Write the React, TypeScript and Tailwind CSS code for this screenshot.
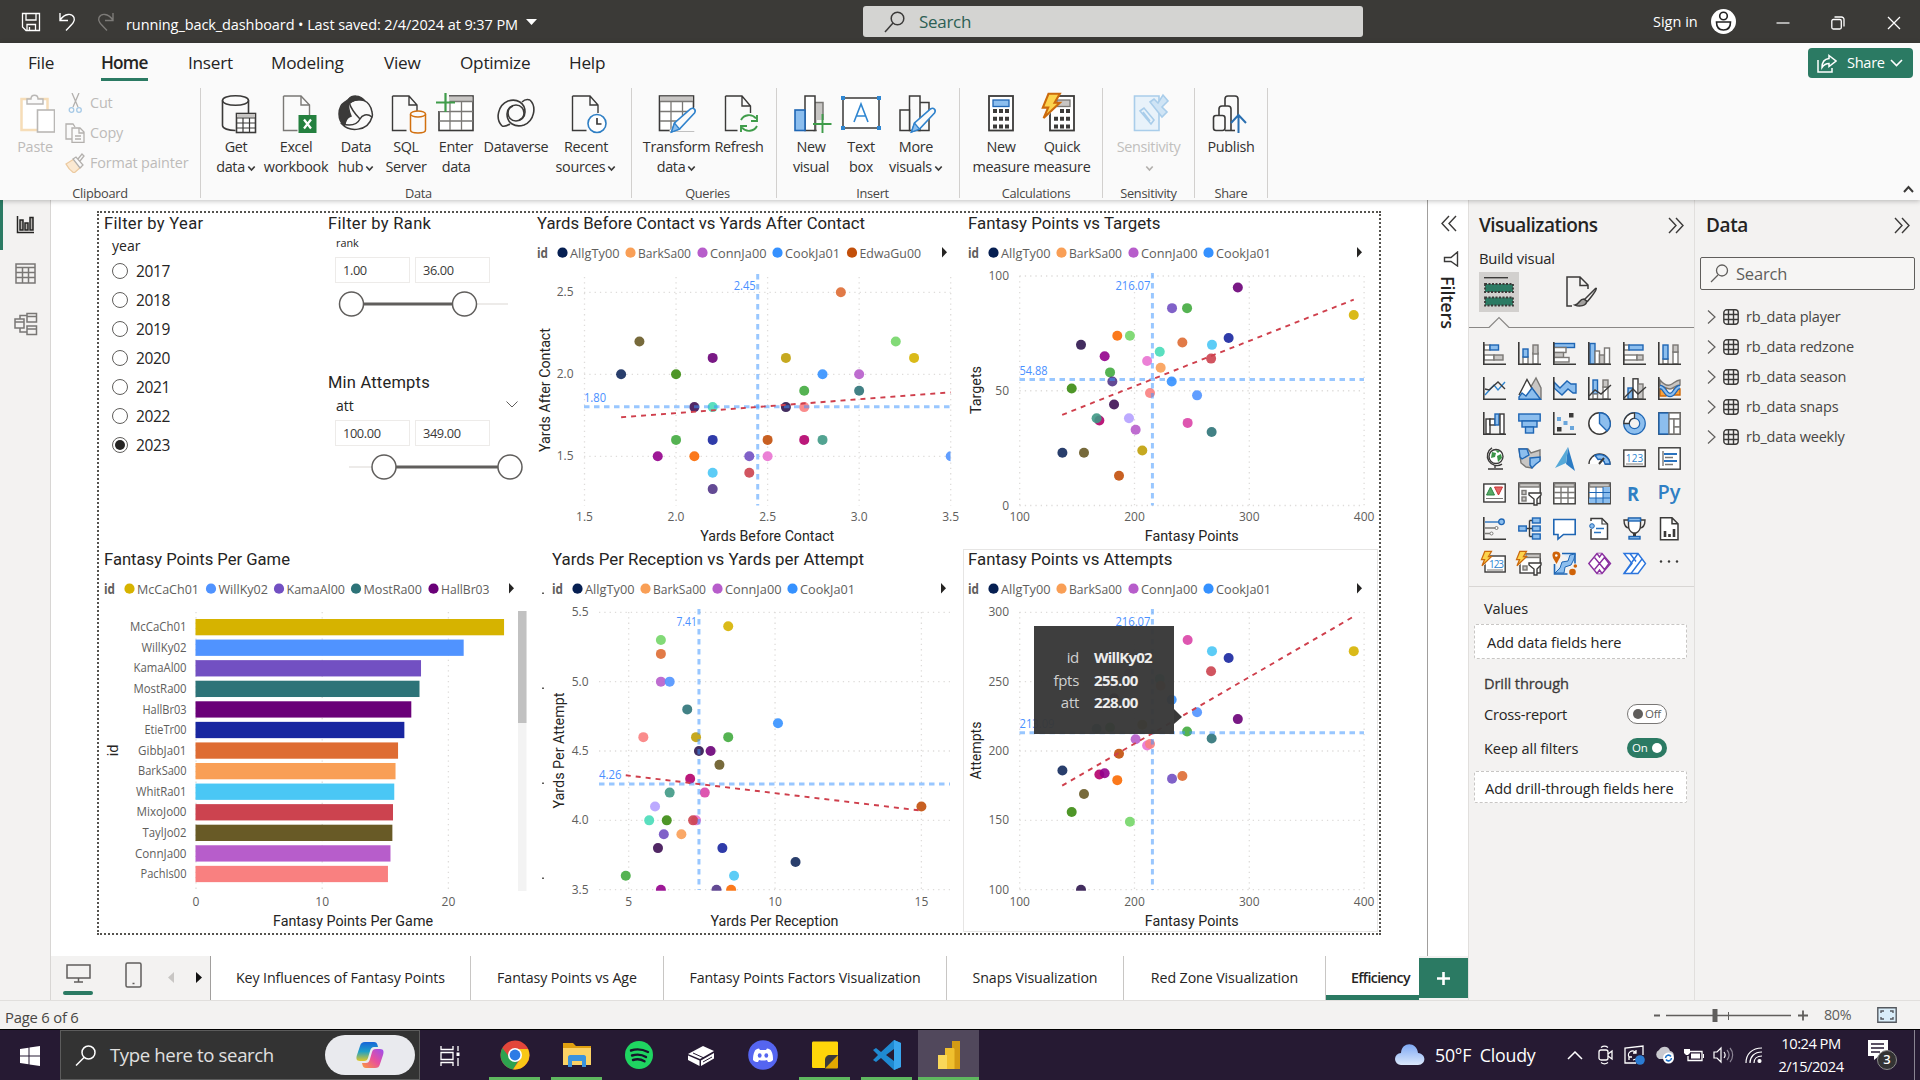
import React from "react";

/* ---------- shared drawing helpers ---------- */

const INK = "#3b3a39";
const BLUE = "#1f66b4";
const SKY = "#8cbeee";
const GREY = "#7a7875";
const SILVER = "#c8c6c4";

const fills: Record<string, { fill: string; stroke: string }> = {
  b: { fill: SKY, stroke: BLUE },
  g: { fill: SILVER, stroke: GREY },
  w: { fill: "#fff", stroke: GREY },
  k: { fill: "#fff", stroke: INK },
  n: { fill: "none", stroke: INK },
  s: { fill: INK, stroke: INK },
};

type BoxSpec = [number, number, number, number, string];

const Boxes = ({ items, sw = 1.4 }: { items: BoxSpec[]; sw?: number }) => (
  <>
    {items.map(([x, y, w, h, k], i) => (
      <rect key={i} x={x} y={y} width={w} height={h} strokeWidth={sw} {...fills[k]} />
    ))}
  </>
);

const Line = ({ d, c = INK, w = 1.4, f = "none" }: { d: string; c?: string; w?: number; f?: string }) => (
  <path d={d} stroke={c} strokeWidth={w} fill={f} />
);

const Axis = () => <Line d="M.8 0V22.2H23" w={1.6} />;
const Bolt = ({ x = 0, y = 0, s = 1 }: { x?: number; y?: number; s?: number }) => (
  <path
    transform={`translate(${x} ${y}) scale(${s})`}
    d="M4 .5h7L7.8 6H11L1 15.5 3.8 9H.5z"
    fill="#fcd34d"
    stroke="#cc6a0c"
    strokeWidth="1.3"
  />
);

/* ---------- visualization gallery ---------- */

const gallery: React.ReactNode[] = [
  <><Boxes items={[[1, 3, 6, 5, "w"], [7, 3, 8.5, 5, "b"], [1, 13, 10, 5, "w"], [11, 13, 9, 5, "g"]]} /><Axis /></>,
  <><Boxes items={[[5, 15, 5, 7, "w"], [5, 7, 5, 8, "b"], [15, 11, 5, 11, "w"], [15, 3, 5, 9, "g"]]} /><Axis /></>,
  <><Boxes items={[[1, 1.5, 20.5, 4, "b"], [1, 5.5, 12, 5, "w"], [1, 10.5, 9.5, 5, "g"], [1, 15.5, 15, 4.5, "w"]]} /><Axis /></>,
  <><Boxes items={[[2, 1.5, 5, 20.5, "b"], [7, 9, 4.5, 13, "w"], [11.5, 13, 5, 9, "g"], [16.5, 6, 5, 16, "w"]]} /><Axis /></>,
  <><Boxes items={[[1, 3, 5, 5, "w"], [6, 3, 14, 5, "b"], [1, 13, 13, 5, "w"], [14, 13, 6, 5, "g"]]} /><Axis /></>,
  <><Boxes items={[[5, 17, 5, 5, "w"], [5, 3, 5, 14, "b"], [15, 10, 5, 12, "w"], [15, 3, 5, 7, "g"]]} /><Axis /></>,
  <><Line d="M2 18L11 8l4 5 7-8" c="#2f86d1" /><Line d="M2 12l4 1 9-8 7 7" /><Axis /></>,
  <><Line d="M11 13L18 1l5 10v11h-6z" c={GREY} f={SILVER} /><Line d="M1 18L9 2.5 17 17" f="#fff" /><Line d="M1 22.3V20l3-4 4 3 6-8 8.5 11.3z" c={BLUE} f={SKY} /></>,
  <><Line d="M1 5l6 6 7-7 4 3h5v9h-3l-5-4-6 6-8-7z" c={BLUE} f={SKY} /><Axis /></>,
  <><Boxes items={[[5, 3, 4.5, 14, "b"], [5, 17, 4.5, 5, "w"], [15, 10, 5, 12, "w"], [15, 3, 5, 7, "g"]]} /><Line d="M1 19l6-6 6 4 10-9" /><Axis /></>,
  <><Boxes items={[[5, 11, 4.5, 11, "b"], [10, 1.8, 5, 20.2, "k"], [15, 7, 5, 15, "g"]]} /><Line d="M1 21l9-9 5 5 8-7" /><Axis /></>,
  <><Line d="M2 3c5 6 9 6 12 4s5-4 8-4v5c-4 0-7 4-10 4S4 9 2 9z" c={GREY} f={SILVER} /><Line d="M2 12h6v7H2zM16 12h6v6h-6z" c="#cc6a0c" f="#f9a13c" /><Line d="M2 10c5 0 5 8 10 8s5-8 10-8" c={BLUE} w={4.5} /><Line d="M2 10c5 0 5 8 10 8s5-8 10-8" c={SKY} w={2.2} /><Axis /></>,
  <><Boxes items={[[3, 7, 4, 15, "k"], [7, 7, 5, 6, "k"], [12, 2, 4, 11, "b"], [17, 2, 4, 20, "k"]]} /><Axis /></>,
  <><Boxes items={[[.8, 2, 21.4, 7, "b"], [4, 9, 15, 6, "b"], [7.5, 15, 8, 6, "b"]]} /></>,
  <><g fill="#2f86d1" stroke="none"><rect x="4" y="5" width="4" height="4" opacity=".7" /><rect x="10.5" y="9" width="4" height="4" opacity=".7" /><rect x="17" y="14" width="4" height="4" opacity=".7" /></g><rect x="16" y="1" width="4.500" height="4.500" fill={INK} /><rect x="4" y="15" width="4.500" height="4.500" fill={INK} /><Axis /></>,
  <><circle cx="11.5" cy="11.5" r="10.7" fill="#fff" stroke={INK} strokeWidth="1.5" /><Line d="M11.5 .8v10.7l7.5 7.6A10.7 10.7 0 0 0 11.5.8z" c={BLUE} f={SKY} /></>,
  <><circle cx="11.5" cy="11.5" r="8" fill="none" stroke={BLUE} strokeWidth="6.8" /><circle cx="11.5" cy="11.5" r="8" fill="none" stroke={SKY} strokeWidth="4.4" /><path d="M11.5 .8v5.4a5.3 5.3 0 0 0-5.3 5.3H.8A10.7 10.7 0 0 1 11.5.8z" fill="#fff" stroke={INK} strokeWidth="1.3" /></>,
  <><Boxes items={[[.8, .8, 21.4, 21.4, "n"], [1, 1, 10, 21, "b"], [11, 1, 11, 6, "w"], [11, 7, 5, 15, "w"], [16, 7, 6, 8, "w"], [16, 15, 6, 7, "w"]]} /></>,
  <><circle cx="13" cy="9.5" r="7" fill="#fff" stroke={INK} strokeWidth="1.4" /><path d="M9 5l4 1-1 4-4 1zM14 9l4-2 1 4-4 4zM12 3l5 1-2 2z" fill="#3a9448" /><Line d="M9 .8A9.3 9.3 0 1 0 19 17.2M12 18v3M5 22h15" /></>,
  <><Line d="M1 2h9l3 4 9-3v10l-5 3-3 5-6-1-5-4z" c={GREY} f={SILVER} /><Line d="M1 2h8l2 6-7 4-2-2zM12 11l10-1v4l-4 3-4 4-2-3z" c={BLUE} f={SKY} /></>,
  <><path d="M15 0l7 24-9-7z" fill="#2b7cc4" /><path d="M15 0L2 21l11-5z" fill="#56a9d8" /></>,
  <><Line d="M1 17a10.5 10 0 0 1 21 0h-5a5.5 5.5 0 0 0-10.500z" f="#fff" /><Line d="M7 8.500A10.500 10 0 0 1 22 17h-5a5.500 5.500 0 0 0-7-4.500z" c={BLUE} f={SKY} /><Line d="M11 17l5-6" w={2} /></>,
  <><Boxes items={[[.8, 3, 21.4, 16.500, "k"]]} /><text x="2.800" y="14.500" fontSize="10" fill="#2f86d1" textLength="17.500">123</text><Line d="M3 17h17" c={GREY} w={1} /></>,
  <><Boxes items={[[.8, .8, 21.4, 21.4, "k"]]} /><Line d="M5 4v15M7 10.500h8M7 17.500h8" c={GREY} /><Line d="M6 7h13M6 14h13" c="#2a73bf" w={2} /></>,
  <><Boxes items={[[.8, 2, 21.4, 18, "k"]]} /><path d="M7.500 5l4 8h-8z" fill="#58a866" stroke="#2c8543" /><path d="M15.500 13l-4-8h8z" fill="#e36565" stroke="#c93232" /><Line d="M3 16.500h17" c={GREY} w={1} /></>,
  <><Boxes items={[[.8, 1, 21.4, 20.500, "k"], [1.500, 1.500, 20, 3.500, "g"], [4, 8.500, 4, 4, "g"], [4, 15, 4, 4, "g"]]} /><Line d="M11 11h12v2l-4 4v6h-3v-6l-5-4z" f="#fff" /></>,
  <><Boxes items={[[.8, 1, 21.4, 20.800, "k"], [1.500, 1.500, 20, 3.500, "g"]]} /><Line d="M1 10.500h21M1 16h21M8 5v16M15 5v16" c={GREY} /></>,
  <><Boxes items={[[.8, 1, 21.4, 20.800, "k"], [1.500, 1.500, 20, 3.500, "g"]]} /><path d="M15 5h7v16H1v-5h14z" fill={SKY} /><Line d="M1 10.500h21M1 16h21M8 5v16M15 5v16" c={BLUE} w={1} /></>,
  <text x="4" y="19" fontSize="20" fontWeight="700" fill="#2f7fc4" textLength="12" lengthAdjust="spacingAndGlyphs">R</text>,
  <text x="-.5" y="17" fontSize="20" fontWeight="600" fill="#2f7fc4" textLength="23" lengthAdjust="spacingAndGlyphs">Py</text>,
  <><Line d="M2 5h14" c="#2a73bf" /><circle cx="18.500" cy="4.800" r="2.800" {...fills.b} strokeWidth="1.300" /><Line d="M2 11h10M2 16.500h5" c={GREY} /><circle cx="13.500" cy="11" r="1.500" {...fills.w} /><circle cx="8.500" cy="16.500" r="1.500" {...fills.w} /><Axis /></>,
  <><Line d="M8 11.500h7M11.500 3.500v16M11.500 3.500H14M11.500 19.500H14" /><Boxes items={[[.8, 9, 7.500, 5, "b"], [14.500, 1, 7.700, 5, "b"], [14.500, 9, 7.700, 5, "b"], [14.500, 17, 7.700, 5, "b"]]} /></>,
  <Line d="M.8 2.500h21.400v15H10.500L5 22v-4.500H.8z" c={BLUE} f="#fff" w={1.600} />,
  <><Line d="M3 4V1.500h11l5.500 5.500v15H3V12" f="#fff" w={1.500} /><Line d="M14 1.500V7h5.500" w={1.200} /><circle cx="4" cy="9" r="2.300" {...fills.b} /><Line d="M8 11.500h8M6 15.500h7" c="#2a73bf" /></>,
  <><Line d="M5.500 3H1c0 6 2 8 5.500 8M17.500 3H22c0 6-2 8-5.500 8" /><Line d="M5.500 1.500h12V8c0 4-2 7-4.500 8h-3c-2.500-1-4.500-4-4.500-8z" f="#fff" /><Boxes items={[[5.500, 1, 12, 3, "b"], [6, 19.500, 11, 2.500, "b"]]} /><path d="M10 16h3v3h-3z" fill={INK} /></>,
  <><Line d="M2.500.8H14l6 6v16H2.500zM14 .8v6h6" f="#fff" w={1.500} /><Line d="M7 20v-6M11.500 20v-3M16 20v-8" w={2.600} /></>,
  <><Boxes items={[[2, 4, 20.200, 16, "k"]]} /><text x="6" y="16" fontSize="10" fill="#2f86d1" textLength="15">123</text><Line d="M4 18h16" c={GREY} w={1} /><path d="M-2-1H9L2 13h-4z" fill="#f3f2f1" /><Bolt x={-2} y={-1} s={0.95} /></>,
  <><Boxes items={[[2, 2, 20.200, 19, "k"], [8, 2, 14, 3.500, "g"], [5, 14, 4, 4, "g"]]} /><Line d="M11 11h12v2l-4 4v6h-3v-6l-5-4z" f="#fff" /><path d="M-2-1H9L2 13h-4z" fill="#f3f2f1" /><Bolt x={-2} y={-1} s={0.95} /></>,
  <><Line d="M9 1.500h13v10M1.500 12v10h13" c={BLUE} f="#dcebf9" w={1.600} /><Line d="M22 2l-5 1-2 6-6 1-2 6-5 5h9l1-6 6-2 3-6z" c={BLUE} f={SKY} w={1} /><path d="M3-.5c4 0 5 3 4 6L3.500 12 0 6C-1 3-1-.5 3-.5z" fill="#cf6309" /><circle cx="3.300" cy="3.500" r="1.300" fill="#fff" /><circle cx="19.500" cy="20" r="3.300" fill="#cf6309" /><circle cx="22.300" cy="14" r="1.800" fill="#cf6309" /></>,
  <g fill="#fff" stroke="#8a2fa0" strokeWidth="1.400"><path d="M9 1.500h5l8.500 10-8.500 10H9L.8 11.500z" /><path d="M11.500 11.500l5-6 4.500 6-4.500 6zM11.500 11.500l-5-6M11.500 11.500l-5 6M9 1.500l2.500 3.500L14 1.500M9 21.500l2.500-3.500 2.500 3.500" /></g>,
  <g fill="#fff" stroke="#2b75dd" strokeWidth="1.400"><path d="M1 1.500h14l7.500 10-7.500 10H1l8-10z" /><path d="M7 1.500l6 8M15 1.500L1 21.500M19 7L8 21.500" fill="none" /></g>,
  <g fill={INK}><circle cx="3" cy="9.500" r="1.200" /><circle cx="11" cy="9.500" r="1.200" /><circle cx="19" cy="9.500" r="1.200" /></g>,
];

/* ---------- ribbon ---------- */

const Pencil = ({ x = 0 }: { x?: number }) => (
  <g transform={`translate(${x} 0)`}>
    <path d="M14 39l3-9 16-14c3-2 6 1 4 4L22 36z" fill="#fafafa" stroke="#2f82cc" strokeWidth="1.600" />
    <path d="M14 39l3-9 5 6z" fill={SKY} stroke="#2f82cc" strokeWidth="1.300" />
  </g>
);
const Cylinder = ({ x, y, w, h, c }: { x: number; y: number; w: number; h: number; c: string }) => (
  <g fill="#fafafa" stroke={c} strokeWidth="1.500">
    <path d={`M${x} ${y + 3}v${h - 6}c0 4 ${w} 4 ${w} 0v-${h - 6}`} />
    <ellipse cx={x + w / 2} cy={y + 3} rx={w / 2} ry="3" />
  </g>
);

const icons: Record<string, React.ReactNode> = {
  getData: (
    <>
      <g fill="none" stroke={INK} strokeWidth="1.600">
        <ellipse cx="19.500" cy="7.500" rx="13" ry="4.800" />
        <path d="M6.500 7.500v25c0 3 6 5 13 5M32.500 7.500V20" />
      </g>
      <rect x="20.500" y="20.500" width="19" height="19" fill="#fff" stroke={INK} strokeWidth="1.600" />
      <rect x="21" y="21" width="18" height="3.500" fill={SILVER} />
      <Line d="M20.500 25h19M20.500 30h19M20.500 35h19M27 25v14M33.500 25v14" w={1.200} />
    </>
  ),
  excel: (
    <>
      <Line d="M7.500 3h17.500l8.500 9v10M7.500 3v34.500h14" c={GREY} />
      <Line d="M25 3v9h8.500" c={GREY} />
      <rect x="22.500" y="22" width="18" height="18" fill="#24803f" />
      <Line d="M28 26.500l7 9M35 26.500l-7 9" c="#fff" w={2.200} />
    </>
  ),
  hub: (
    <g fill="none" stroke={INK} strokeWidth="1.500">
      <path d="M9 33C1 28 1 14 9 9l4-3c-1 6-1 11 2 17-3 1-6 4-6 10z" fill={INK} />
      <path d="M13 6c3-4 11-4 15 1-5-1-10 0-14 3z" fill={INK} />
      <path d="M14 9c10-5 20-2 22 10 1 4 0 6-2 6M13 9c2 7 5 11 11 17" />
      <path d="M6 31c7 8 26 8 30-7-5-4-10-2-12 2-3 6-10 7-18 5z" fill="#fafafa" />
    </g>
  ),
  sql: (
    <>
      <Line d="M6.500 3H23l8 9v6M6.500 3v34.500h14M23 3v9h8" />
      <Cylinder x={24.500} y={18} w={15} h={22} c="#d2700f" />
    </>
  ),
  enter: (
    <>
      <rect x="3" y="3" width="34" height="34.500" fill="#fff" stroke={INK} strokeWidth="1.600" />
      <rect x="13" y="3.500" width="23.500" height="5" fill={SILVER} />
      <Line d="M14 8.500h23M3 18.500h34M3 28h34M14 8v29M25.500 8v29" c={GREY} w={1.300} />
      <path d="M-1 0h14v18H-1z" fill="#fafafa" />
      <Line d="M9.500 0v19M0 9.500h19" c="#3f9c4a" w={2.200} />
    </>
  ),
  dataverse: (
    <g fill="none" stroke={INK} strokeWidth="1.600">
      <path d="M6 33C-1 26 2 12 12 8c9-3 17 2 17 11 0 5-4 9-9 9s-8-4-8-8c0-3 2-6 5-7" />
      <path d="M34 7c7 7 4 21-6 25-9 3-17-2-17-11 0-5 4-9 9-9s8 4 8 8c0 3-2 6-5 7" />
      <path d="M6 33c3 1 5 0 8-2M34 7c-3-1-6 0-8 2" />
    </g>
  ),
  recent: (
    <>
      <Line d="M6.500 3H24l8 9v8M6.500 3v34.500h14M24 3v9h8" />
      <circle cx="31" cy="30.500" r="9" fill="#fff" stroke="#2f7fc4" strokeWidth="1.600" />
      <Line d="M31 25v6h4.500" w={1.700} />
    </>
  ),
  transform: (
    <>
      <rect x="2.500" y="3" width="34" height="34.500" fill="#fff" stroke={INK} strokeWidth="1.600" />
      <rect x="3" y="3.500" width="33" height="5" fill={SILVER} />
      <Line d="M3 8.500h33M3 18.500h33M3 28h33M14 8v29M25.500 8v29" c={GREY} w={1.300} />
      <path d="M38 14v24H12z" fill="#fafafa" />
      <Pencil x={0.500} />
    </>
  ),
  refresh: (
    <>
      <Line d="M6.500 3H23l8.500 10v7M6.500 3v34.500h12M23 3v10h8.500" />
      <Line d="M22 27a9 9 0 0 1 15-1.500M38 22v6h-6M38 33a9 9 0 0 1-15 1.500M22 39v-6h6" c="#3f9c4a" w={1.900} />
    </>
  ),
  newVisual: (
    <>
      <rect x="23" y="9.500" width="9" height="28" fill={SILVER} stroke={GREY} strokeWidth="1.500" />
      <rect x="14" y="3" width="10" height="34.500" fill="#fff" stroke={INK} strokeWidth="1.500" />
      <rect x="4" y="17" width="10" height="20.500" fill={SKY} stroke={BLUE} strokeWidth="1.600" />
      <path d="M26 27h12v12H26z" fill="#fafafa" />
      <Line d="M31.500 21v19M22 31h18.500" c="#3f9c4a" w={1.900} />
    </>
  ),
  textBox: (
    <>
      <rect x="2" y="5" width="36" height="30" fill="#fff" stroke={INK} strokeWidth="1.500" />
      <g fill="#2f86d1"><path d="M0 3h4v4H0zM36 3h4v4h-4zM0 33h4v4H0zM36 33h4v4h-4z" /></g>
      <Line d="M13 29l7-18 7 18M15.500 23h9" c="#2f86d1" w={1.600} />
    </>
  ),
  moreVisuals: (
    <>
      <g fill="#fafafa" stroke={INK} strokeWidth="1.500">
        <path d="M23 9.500h10v28H23z" /><path d="M13.500 3H24v34.500H13.500z" /><path d="M4 17h9.500v20.500H4z" />
      </g>
      <Pencil x={1.500} />
    </>
  ),
  newMeasure: (
    <>
      <rect x="8" y="3" width="24" height="34.500" fill="#fff" stroke={INK} strokeWidth="1.800" />
      <rect x="12" y="7" width="16" height="6.500" fill={SKY} stroke={BLUE} strokeWidth="1.300" />
      <path d="M14 16v20M20 16v20M26 16v20" stroke={INK} strokeWidth="4" strokeDasharray="4 3.700" />
    </>
  ),
  quickMeasure: (
    <>
      <rect x="8" y="3" width="24" height="34.500" fill="#fff" stroke={INK} strokeWidth="1.800" />
      <rect x="15" y="7" width="13" height="6.500" fill={SILVER} stroke={GREY} strokeWidth="1.300" />
      <path d="M14 23.700v12.300M20 16v20M26 16v20" stroke={INK} strokeWidth="4" strokeDasharray="4 3.700" />
      <path d="M0 0h16l-3 9h4L4 26H0z" fill="#fafafa" />
      <Bolt x={0} y={0} s={1.620} />
    </>
  ),
  sensitivity: (
    <g fill="#e8f2fa" stroke="#a9cdea" strokeWidth="1.600">
      <path d="M5.500 3H30v34.500H5.500z" />
      <path d="M11 18l4-3 10 12-3 4zM14 19l7 9" />
      <path d="M21 9l4-3 4 4 5-8 5 6-6 6 5 5-5 5-4-5z" fill="#cfe4f5" />
    </g>
  ),
  publish: (
    <g>
      <g fill="#fafafa" stroke={INK} strokeWidth="1.600">
        <path d="M14 14V6c0-2 1-3 3-3h7c2 0 3 1 3 3v31" />
        <path d="M8 23v-7c0-2 1-3 3-3h6c2 0 3 1 3 3v21.500" />
        <rect x="2.500" y="22.500" width="11.500" height="15" rx="2.500" />
        <path d="M14 37.500h10" />
      </g>
      <path d="M24 22h13v18H24z" fill="#fafafa" />
      <Line d="M27.500 40V22.500M20 30l7.500-8 7.500 8" c="#2a6fb0" w={2} />
    </g>
  ),
};

const Caret = ({ className = "text-[#3b3a39]" }: { className?: string }) => (
  <svg className={`inline-block h-[7px] w-[9px] ${className}`} viewBox="0 0 9 7">
    <path d="M1.300 1.500l3.200 3.500 3.200-3.500" fill="none" stroke="currentColor" strokeWidth="1.700" />
  </svg>
);

type Btn = { icon: string; lines: string[]; w: string; caret?: boolean; off?: boolean };

const groups: { label: string; cls: string; buttons: Btn[] }[] = [
  {
    label: "Data", cls: "w-[431px] pl-[5px]",
    buttons: [
      { icon: "getData", lines: ["Get", "data"], w: "w-[60px]", caret: true },
      { icon: "excel", lines: ["Excel", "workbook"], w: "w-[60px]" },
      { icon: "hub", lines: ["Data", "hub"], w: "w-[60px]", caret: true },
      { icon: "sql", lines: ["SQL", "Server"], w: "w-[40px]" },
      { icon: "enter", lines: ["Enter", "data"], w: "w-[60px]" },
      { icon: "dataverse", lines: ["Dataverse"], w: "w-[60px]" },
      { icon: "recent", lines: ["Recent", "sources"], w: "w-[80px]", caret: true },
    ],
  },
  {
    label: "Queries", cls: "w-[145px] pl-[7px]",
    buttons: [
      { icon: "transform", lines: ["Transform", "data"], w: "w-[75px]", caret: true },
      { icon: "refresh", lines: ["Refresh"], w: "w-[50px]" },
    ],
  },
  {
    label: "Insert", cls: "w-[183px] pl-[9px]",
    buttons: [
      { icon: "newVisual", lines: ["New", "visual"], w: "w-[50px]" },
      { icon: "textBox", lines: ["Text", "box"], w: "w-[50px]" },
      { icon: "moreVisuals", lines: ["More", "visuals"], w: "w-[60px]", caret: true },
    ],
  },
  {
    label: "Calculations", cls: "w-[143px] pl-[10px]",
    buttons: [
      { icon: "newMeasure", lines: ["New", "measure"], w: "w-[62px]" },
      { icon: "quickMeasure", lines: ["Quick", "measure"], w: "w-[60px]" },
    ],
  },
  {
    label: "Sensitivity", cls: "w-[92px]",
    buttons: [{ icon: "sensitivity", lines: ["Sensitivity", ""], w: "w-[91px]", caret: true, off: true }],
  },
  { label: "Share", cls: "w-[73px]", buttons: [{ icon: "publish", lines: ["Publish"], w: "w-[72px]" }] },
];

const RibbonButton = ({ b }: { b: Btn }) => (
  <div className={`flex shrink-0 flex-col items-center ${b.w}`}>
    <svg className="h-10 w-10 shrink-0 overflow-visible" viewBox="0 0 40 40">{icons[b.icon]}</svg>
    <div className={`mt-1 text-center text-[14.400px] leading-5 whitespace-nowrap tracking-[-0.320px] ${b.off ? "text-[#c1bfbd]" : "text-[#323130]"}`}>
      {b.lines.map((l, i) => (
        <div key={i}>
          {l}
          {b.caret && i === b.lines.length - 1 && (
            <span className="ml-[2px]"><Caret className={b.off ? "text-[#b3b0ad]" : "text-[#3b3a39]"} /></span>
          )}
        </div>
      ))}
    </div>
  </div>
);

const Clipboard = () => (
  <div className="flex h-[110px] w-[201px] flex-col border-r border-[#d2d0ce]">
    <div className="flex h-[97px] shrink-0 pt-[5px] text-[#bdbbb9]">
      <div className="ml-[15px] flex w-10 flex-col items-center">
        <svg className="h-10 w-10" viewBox="0 0 40 40" fill="none">
          <rect x="6.500" y="6" width="26" height="31" fill="#fff" stroke="#f6ddb8" strokeWidth="2.500" />
          <path d="M12 6h4c0-5 7-5 7 0h5v5H12z" fill="#fafafa" stroke="#b9b7b5" strokeWidth="1.400" />
          <rect x="22.500" y="17" width="17" height="22" fill="#fff" stroke="#b9b7b5" strokeWidth="1.600" />
        </svg>
        <span className="mt-1 text-[14.400px] leading-5 tracking-[-0.200px]">Paste</span>
      </div>
      <div className="ml-[10px] flex flex-col text-[14.400px] tracking-[-0.150px]">
        <div className="flex h-5 items-center gap-[5px]">
          <svg className="h-5 w-5" viewBox="0 0 20 20" fill="none" stroke="#b3b0ad" strokeWidth="1.300">
            <path d="M7 0l6 14M14 0L8 14" /><circle cx="6.500" cy="17" r="2.300" stroke="#a6c9e6" /><circle cx="14" cy="17" r="2.300" stroke="#a6c9e6" />
          </svg>
          Cut
        </div>
        <div className="mt-[10px] flex h-5 items-center gap-[5px]">
          <svg className="h-5 w-5" viewBox="0 0 20 20" fill="none" stroke="#b3b0ad" strokeWidth="1.300">
            <path d="M7 16H1V1h7l2 3" /><path d="M7 5h8l4 4v10.500H7zM14 5v5h5M10 13h6M10 16h6" />
          </svg>
          Copy
        </div>
        <div className="mt-[10px] flex h-5 items-center gap-[5px]">
          <svg className="h-5 w-5" viewBox="0 0 20 20" fill="none" stroke="#b3b0ad" strokeWidth="1.300">
            <path d="M1 11l8-5 7 8-7 6c-3-2-6-5-8-9z" fill="#fbe9d2" stroke="#eccaa0" /><path d="M8 6l3-2 7 8-3 3zM13 6l4-5 2 2-4 5" fill="#fafafa" />
          </svg>
          <span className="whitespace-nowrap">Format painter</span>
        </div>
      </div>
    </div>
    <span className="text-center text-[12.800px] leading-4 tracking-[-0.300px] text-[#484644]">Clipboard</span>
  </div>
);

const TitleBar = () => (
  <header className="flex h-[43px] items-center bg-[#3b3a37] text-white">
    <svg className="ml-[21px] h-5 w-5" viewBox="0 0 20 20" fill="none" stroke="#fff" strokeWidth="1.300">
      <path d="M1.500 1.500h17v17H5l-3.500-3.500zM5 1.500v6.500h10V1.500M6 18V12.500h8.500V18M8.500 18v-3" />
    </svg>
    <svg className="ml-[17px] h-5 w-5" viewBox="0 0 20 20" fill="none" stroke="#fff" strokeWidth="1.400">
      <path d="M2 1v7.500h8M2 8C7 1 14 1 16 5.500c1.500 3.500-1 6-8 13" />
    </svg>
    <svg className="ml-[17px] h-5 w-5" viewBox="0 0 20 20" fill="none" stroke="#7d7b78" strokeWidth="1.400">
      <path d="M18 1v7.500h-8M18 8C13 1 6 1 4 5.500 2.500 9 5 11.500 12 18.500" />
    </svg>
    <span className="ml-[11px] w-[392px] pt-[6px] text-[14.500px] whitespace-nowrap tracking-[-0.090px]">
      running_back_dashboard • Last saved: 2/4/2024 at 9:37 PM
    </span>
    <svg className="ml-[8px] h-[6px] w-[11px]" viewBox="0 0 11 6"><path d="M0 0h11L5.500 6z" fill="#fff" /></svg>
    <div className="ml-[326px] flex h-[31px] w-[500px] items-center rounded-[3px] bg-[#d4d4d2] pl-[21px]">
      <svg className="h-[22px] w-[22px]" viewBox="0 0 22 22" fill="none" stroke="#3b3a39" strokeWidth="1.500">
        <circle cx="13.500" cy="7.500" r="6.300" /><path d="M9 12L1 21" />
      </svg>
      <span className="ml-[13px] text-[17px] tracking-[-0.300px] text-[#2d5f54]">Search</span>
    </div>
    <span className="ml-[290px] w-[58px] text-[14.500px] whitespace-nowrap">Sign in</span>
    <svg className="h-[25px] w-[25px]" viewBox="0 0 25 25">
      <circle cx="12.500" cy="12.500" r="12.500" fill="#fff" />
      <circle cx="12.500" cy="7" r="3.800" fill="none" stroke="#222" strokeWidth="1.600" />
      <path d="M5.500 13h14c0 5-2.500 8-7 8s-7-3-7-8z" fill="none" stroke="#222" strokeWidth="1.600" />
    </svg>
    <svg className="ml-[40px] h-[14px] w-[14px]" viewBox="0 0 14 14"><path d="M.5 8h13" stroke="#fff" strokeWidth="1.200" /></svg>
    <svg className="mt-[2px] ml-[41px] h-[14px] w-[14px]" viewBox="0 0 14 14" fill="none" stroke="#fff" strokeWidth="1.300">
      <rect x=".8" y="3.500" width="9.500" height="9.500" rx="1.500" /><path d="M3.500 1h7A2.500 2.500 0 0 1 13 3.500v7" />
    </svg>
    <svg className="mt-[2px] ml-[42px] h-[14px] w-[14px]" viewBox="0 0 14 14"><path d="M1 1l12 12M13 1L1 13" stroke="#fff" strokeWidth="1.300" /></svg>
  </header>
);

const tabs = [
  ["File", "w-[73px]"], ["Home", "w-[87px]"], ["Insert", "w-[83px]"], ["Modeling", "w-[113px]"],
  ["View", "w-[76px]"], ["Optimize", "w-[109px]"], ["Help", "w-[60px]"],
];

const Ribbon = () => (
  <div className="relative z-10 h-[157px] shrink-0 bg-[#fafafa] shadow-[0_1px_5px_rgba(0,0,0,0.25)]">
    <div className="flex h-[45px] justify-between">
      <nav className="flex pl-7 text-[17.200px] tracking-[-0.250px] text-[#252423]">
        {tabs.map(([t, w]) => (
          <div key={t} className={`pt-[5px] ${w}`}>
            <span className={`inline-block h-[33px] pt-[2px] ${t === "Home" ? "border-b-[3px] border-[#2b7a63] font-semibold tracking-[-0.800px]" : ""}`}>{t}</span>
          </div>
        ))}
      </nav>
      <div className="mt-[5px] mr-[7px] flex h-[30px] w-[105px] items-center rounded bg-[#2b7a63] pl-[9px] text-white">
        <svg className="h-[19px] w-[20px]" viewBox="0 0 20 19" fill="none" stroke="#fff" strokeWidth="1.500">
          <path d="M1 6v12h14v-4" /><path d="M12 1.500l7 5.500-7 5.500V9.500c-3 0-5 1-7 4 0-5 2-8.500 7-9z" />
        </svg>
        <span className="ml-[10px] w-[39px] text-[14.600px] tracking-[-0.300px]">Share</span>
        <svg className="ml-1 h-[8px] w-[13px]" viewBox="0 0 13 8"><path d="M1 1l5.500 5.500L12 1" fill="none" stroke="#fff" strokeWidth="1.600" /></svg>
      </div>
    </div>
    <div className="flex">
      <Clipboard />
      {groups.map((g) => (
        <div key={g.label} className={`flex h-[110px] shrink-0 flex-col border-r border-[#d2d0ce] ${g.cls}`}>
          <div className="flex h-[97px] shrink-0 pt-[5px]">{g.buttons.map((b) => <RibbonButton key={b.icon} b={b} />)}</div>
          <span className="text-center text-[12.800px] leading-4 tracking-[-0.300px] text-[#484644]">{g.label}</span>
        </div>
      ))}
      <svg className="mt-[97px] mr-[6px] ml-auto h-[8px] w-[11px]" viewBox="0 0 11 8"><path d="M1 7l4.500-5L10 7" fill="none" stroke={INK} strokeWidth="2" /></svg>
    </div>
  </div>
);

/* ---------- charts ---------- */

const C = {
  navy: "#12295c", sand: "#f99f56", orchid: "#b75dcb", azure: "#3591ff", rust: "#c24f0a", gold: "#d6b300", sky: "#5093ff",
  violet: "#7250c2", teal: "#2d7378", plum: "#6a0078", royal: "#1826a0", copper: "#de6c33", cyan: "#4ac7f5",
  red: "#cc434f", olive: "#685a26", salmon: "#f98080", lime: "#74d668", forest: "#3b8b11", green: "#42ab3f", mustard: "#c0a008",
  aqua: "#48dbb8", ink: "#2f164e", eggplant: "#3e1054", berry: "#b4006c", sea: "#3f9985", magenta: "#94008c", orange: "#fb6a03",
  pink: "#e973d2", iris: "#523688", rose: "#da44a7", lilac: "#b5a1ff",
};
type Dot = [number, number, keyof typeof C];

const contactDots: Dot[] = [
  [1.8, 2.2, "olive"], [1.7, 2, "navy"], [2, 2, "forest"], [2.2, 2.1, "plum"], [2.9, 2.5, "copper"], [3.2, 2.2, "lime"],
  [3.3, 2.1, "gold"], [2.6, 2.1, "mustard"], [2.8, 2, "azure"], [3, 2, "orchid"], [2.7, 1.9, "green"], [3, 1.9, "teal"],
  [2.1, 1.8, "eggplant"], [2.2, 1.8, "aqua"], [2.6, 1.8, "ink"], [2.7, 1.8, "salmon"], [2, 1.6, "green"], [2.2, 1.6, "royal"],
  [2.5, 1.6, "rust"], [2.7, 1.6, "berry"], [2.8, 1.6, "sea"], [1.9, 1.5, "magenta"], [2.1, 1.5, "orange"], [2.4, 1.5, "violet"],
  [2.5, 1.5, "pink"], [3.5, 1.5, "sky"], [2.2, 1.4, "cyan"], [2.4, 1.4, "red"], [2.2, 1.3, "iris"],
];
const targetDots: Dot[] = [
  [290, 95, "plum"], [232.7, 86, "violet"], [245.8, 86, "green"], [391, 83, "gold"], [185, 74, "orange"], [196, 74, "lime"],
  [153.4, 70, "ink"], [241.7, 71, "copper"], [282, 73, "royal"], [267.5, 70, "cyan"], [266.7, 64, "red"], [174, 65, "magenta"],
  [222, 67, "aqua"], [211, 63, "pink"], [222.8, 60, "sand"], [178.7, 58, "green"], [180.7, 54, "iris"], [145.3, 51, "forest"],
  [232.4, 54, "azure"], [254.5, 48, "sky"], [213.5, 49, "salmon"], [182.2, 44, "eggplant"], [169.4, 37, "berry"], [167, 38, "sea"],
  [195.2, 38, "lilac"], [201, 33, "orchid"], [246.3, 36, "rose"], [267.2, 32, "teal"], [137.2, 23, "navy"], [156, 23, "olive"],
  [206.8, 24, "mustard"], [186.5, 13, "rust"],
];
const receptionDots: Dot[] = [
  [8.4, 5.4, "gold"], [6.1, 5.3, "lime"], [6.1, 5.2, "copper"], [6.1, 5, "orchid"], [6.4, 5, "sky"], [7, 4.8, "teal"],
  [10.1, 4.7, "azure"], [5.5, 4.6, "salmon"], [7.3, 4.6, "mustard"], [8.4, 4.6, "green"], [7.4, 4.5, "ink"], [7.8, 4.5, "plum"],
  [8.1, 4.4, "olive"], [7.1, 4.3, "berry"], [7.6, 4.2, "rose"], [6.4, 4.2, "sea"], [5.9, 4.1, "lilac"], [5.7, 4, "aqua"],
  [6.3, 4, "forest"], [7.3, 4, "pink"], [7.2, 4, "red"], [6.2, 3.9, "violet"], [6.8, 3.9, "sand"], [6, 3.8, "eggplant"],
  [8.2, 3.8, "royal"], [10.7, 3.7, "navy"], [4.9, 3.6, "green"], [8.6, 3.6, "cyan"], [6.1, 3.5, "magenta"], [8, 3.5, "iris"],
  [8.5, 3.5, "orange"], [15, 4.1, "rust"],
];
const attemptDots: Dot[] = [
  [246.3, 280, "rose"], [267.5, 272, "cyan"], [282, 267, "royal"], [391, 272, "gold"], [266.7, 257.5, "red"], [254.5, 228, "sky"],
  [290, 223, "plum"], [245.8, 214, "green"], [267.2, 209, "teal"], [201, 208.5, "orchid"], [211, 204, "pink"], [213.5, 205, "salmon"],
  [186.5, 198, "rust"], [137.2, 186, "navy"], [169.4, 183, "berry"], [174, 184, "magenta"], [185, 179, "orange"], [232.7, 180, "violet"],
  [241.7, 182, "copper"], [156, 169, "olive"], [145.3, 156, "forest"], [196, 149, "lime"], [153.4, 100, "ink"], [232.4, 237, "azure"],
  [222, 252, "aqua"], [222.8, 247, "sand"], [167, 216, "sea"], [178.7, 217, "green"], [206.8, 219, "mustard"], [182.2, 238, "eggplant"],
  [195.2, 256, "lilac"],
];

/* text of a given width, so labels keep their measure on the canvas */
const T = ({ x, y, w, s = 12.500, c = "#605e5c", b, a = "start", din, children }: {
  x: number; y: number; w?: number; s?: number; c?: string; b?: boolean; a?: "start" | "middle" | "end"; din?: boolean; children: string;
}) => (
  <text
    x={x} y={y} fontSize={s} fill={c} textAnchor={a} textLength={w} lengthAdjust="spacingAndGlyphs"
    className={din ? "font-['Roboto',sans-serif]" : "font-['Open_Sans',sans-serif]"} fontWeight={b ? 700 : 400}
  >
    {children}
  </text>
);

type LegendItem = [string, string, number, number];
const playerLegend: LegendItem[] = [
  ["AllgTy00", "#061f52", 25.500, 49.500], ["BarkSa00", C.sand, 93.500, 53], ["ConnJa00", C.orchid, 165.500, 56.500], ["CookJa01", C.azure, 240.500, 55],
];
const Legend = ({ x, y, items, arrow }: { x: number; y: number; items: LegendItem[]; arrow: number }) => (
  <g>
    <T x={x} y={y + 5} w={11} b s={13.500}>id</T>
    {items.map(([name, color, dx, w]) => (
      <g key={name}>
        <circle cx={x + dx} cy={y - .3} r="5.100" fill={color} />
        <T x={x + dx + 7.500} y={y + 5} w={w} s={13}>{name}</T>
      </g>
    ))}
    <path d={`M${arrow} ${y - 6}v10.500l5-5.200z`} fill="#252423" />
  </g>
);

const range = (a: number, b: number, step: number) => {
  const out: number[] = [];
  for (let v = a; v <= b + 1e-6; v += step) out.push(v);
  return out;
};

type ScatterProps = {
  box: string; cls: string; title: string; titleX: number; titleW: number; titleY: number;
  x0: number; xv: number; kx: number; xTicks: number[]; left: number; right: number;
  y0: number; yv: number; ky: number; yTicks: number[]; top: number; bottom: number;
  fmt: (n: number) => string; xfmt: (n: number) => string;
  xTitle: string; xTitleW: number; yTitle: string; yTitleX: number; yTitleW: number; yTitleC: number;
  avgX: number; avgXText: string; avgXW: number; avgY: number; avgYText: string; avgYW: number;
  trend: [number, number, number, number]; dots: Dot[]; legend: LegendItem[]; arrow: number; marks?: number[];
};

const Scatter = (p: ScatterProps) => {
  const X = (v: number) => p.x0 + (v - p.xv) * p.kx;
  const Y = (v: number) => p.y0 - (v - p.yv) * p.ky;
  const xm = (p.left + p.right) / 2;
  const clip = p.title.replace(/\W/g, "");
  return (
    <svg className={p.cls} viewBox={p.box}>
      <clipPath id={clip}><rect x={p.left} y={p.top - 2} width={p.right - p.left} height={p.bottom - p.top + 2.800} /></clipPath>
      {p.marks?.map((y) => <rect key={y} x="542" y={y} width="2" height="1.500" fill="#605e5c" />)}
      <T x={p.titleX} y={p.titleY + 6} w={p.titleW} s={16.800} c="#252423" din>{p.title}</T>
      <Legend x={p.titleX} y={p.titleY + 30} items={p.legend} arrow={p.arrow} />
      <g stroke="#dedcda" strokeWidth="1.300" strokeDasharray="1.300 4">
        {p.xTicks.map((v) => <path key={v} d={`M${X(v)} ${p.top}V${p.bottom}`} />)}
        {p.yTicks.map((v) => <path key={v} d={`M${p.left} ${Y(v)}H${p.right}`} />)}
      </g>
      {p.xTicks.map((v) => <T key={v} x={X(v)} y={p.bottom + 15.500} a="middle" s={12}>{p.xfmt(v)}</T>)}
      {p.yTicks.map((v) => <T key={v} x={p.left - 10.500} y={Y(v) + 4} a="end" s={12}>{p.fmt(v)}</T>)}
      <T x={xm} y={p.bottom + 35.500} w={p.xTitleW} a="middle" s={14.500} c="#252423" din>{p.xTitle}</T>
      <g transform={`translate(${p.yTitleX} ${p.yTitleC}) rotate(-90)`}>
        <T x={0} y={5} w={p.yTitleW} a="middle" s={14.500} c="#252423" din>{p.yTitle}</T>
      </g>
      <g clipPath={`url(#${clip})`}>
        {p.dots.map(([x, y, c], i) => <circle key={i} cx={X(x)} cy={Y(y)} r="5" fill={C[c]} opacity=".9" />)}
      </g>
      <g stroke="#3b93ff" strokeOpacity=".52" strokeWidth="3" strokeDasharray="5.500 4.500">
        <path d={`M${X(p.avgX)} ${p.top - 3}V${p.bottom}`} />
        <path d={`M${p.left} ${Y(p.avgY)}H${p.right}`} />
      </g>
      <T x={X(p.avgX) - 2} y={p.titleY + 67} w={p.avgXW} a="end" s={12.500} c="#4a90ff">{p.avgXText}</T>
      <T x={p.left} y={Y(p.avgY) - 5} w={p.avgYW} s={12.500} c="#4a90ff">{p.avgYText}</T>
      <path
        d={`M${X(p.trend[0])} ${Y(p.trend[1])}L${X(p.trend[2])} ${Y(p.trend[3])}`}
        stroke="#cf3f4c" strokeWidth="1.900" strokeDasharray="5 5"
      />
    </svg>
  );
};

const bars: [string, number, string, number][] = [
  ["McCaCh01", 24.45, "#d6b300", 56.500], ["WillKy02", 21.25, "#5093ff", 45], ["KamaAl00", 17.87, "#7250c2", 53], ["MostRa00", 17.75, "#2d7378", 53],
  ["HallBr03", 17.1, "#6a0078", 44], ["EtieTr00", 16.55, "#1826a0", 42], ["GibbJa01", 16.05, "#de6c33", 48.500], ["BarkSa00", 15.85, "#f99f56", 48.500],
  ["WhitRa01", 15.75, "#4ac7f5", 50.500], ["MixoJo00", 15.65, "#cc434f", 50], ["TaylJo02", 15.6, "#685a26", 44], ["ConnJa00", 15.45, "#b75dcb", 51.500],
  ["PachIs00", 15.25, "#f98080", 46],
];
const barLegend: LegendItem[] = [
  ["McCaCh01", "#d6b300", 25.500, 62], ["WillKy02", "#5093ff", 107, 49.500], ["KamaAl00", "#7250c2", 175, 58.500], ["MostRa00", "#2d7378", 252, 58.500], ["HallBr03", "#6a0078", 329.500, 48.500],
];

const BarChart = () => (
  <svg className="h-[384px] w-[436px]" viewBox="99 549 436 384">
    <T x={104} y={565} w={186} s={16.800} c="#252423" din>Fantasy Points Per Game</T>
    <Legend x={104} y={589} items={barLegend} arrow={509} />
    <g stroke="#dedcda" strokeWidth="1.300" strokeDasharray="1.300 4">
      {[0, 10, 20].map((v) => <path key={v} d={`M${196 + v * 12.620} 612V890`} />)}
    </g>
    {bars.map(([name, v, color, w], i) => (
      <g key={name}>
        <rect x="195.500" y={619 + i * 20.570} width={v * 12.620} height="16.300" fill={color} />
        <T x={186.500} y={631.300 + i * 20.570} w={w} a="end" s={12}>{name}</T>
      </g>
    ))}
    {[0, 10, 20].map((v) => <T key={v} x={196 + v * 12.620} y={905.500} a="middle" s={12}>{String(v)}</T>)}
    <T x={353} y={925.500} w={160} a="middle" s={14.500} c="#252423" din>Fantasy Points Per Game</T>
    <g transform="translate(112.500 750.500) rotate(-90)"><T x={0} y={5} a="middle" s={14.500} c="#252423" din>id</T></g>
    <rect x="518" y="611" width="8.500" height="280" fill="#f3f3f3" />
    <rect x="518" y="611" width="8.500" height="112" fill="#c1c1c1" />
  </svg>
);

const Slider = ({ a, b, from, to }: { a: number; b: number; from: number; to: number }) => (
  <svg className="mt-[6px] h-[30px] w-[200px]" viewBox="0 0 200 30">
    <path d={`M${from} 15H${to}`} stroke="#edebe9" strokeWidth="2" />
    <path d={`M${a} 15H${b}`} stroke="#605e5c" strokeWidth="3" />
    <circle cx={a} cy="15" r="12" fill="#fff" stroke="#605e5c" strokeWidth="1.500" />
    <circle cx={b} cy="15" r="12" fill="#fff" stroke="#605e5c" strokeWidth="1.500" />
  </svg>
);

const RangeInputs = ({ lo, hi, cls }: { lo: string; hi: string; cls: string }) => (
  <div className={`flex gap-[5px] pl-[7px] text-[12.800px] tracking-[-0.400px] text-[#3b3a39] ${cls}`}>
    <span className="flex h-[26px] w-[75px] items-center border-[1.500px] border-[#edebe9] pt-px pl-[7px]">{lo}</span>
    <span className="flex h-[26px] w-[75px] items-center border-[1.500px] border-[#edebe9] pt-px pl-[7px]">{hi}</span>
  </div>
);

const din = "font-['Roboto',sans-serif] text-[16.500px] leading-5 text-[#252423] whitespace-nowrap";

const Slicers = () => (
  <div className="flex h-[336px] w-[430px] pt-px">
    <div className="w-[224px] pl-[5px]">
      <h3 className={`${din} tracking-[0.330px]`}>Filter by Year</h3>
      <div className="mt-[2px] pl-2 text-[14px] leading-5 text-[#252423]">year</div>
      <div className="pt-px">
        {["2017", "2018", "2019", "2020", "2021", "2022", "2023"].map((y) => (
          <div key={y} className="flex h-[29px] items-center pl-2 text-[15.500px] tracking-[-0.400px] text-[#252423]">
            <span className="mr-2 mb-[2px] flex h-4 w-4 items-center justify-center rounded-full border border-[#605e5c]">
              {y === "2023" && <span className="h-[10px] w-[10px] rounded-full bg-[#252423]" />}
            </span>
            {y}
          </div>
        ))}
      </div>
    </div>
    <div className="w-[206px] pl-[5px]">
      <h3 className={`${din} tracking-[0.330px]`}>Filter by Rank</h3>
      <div className="mt-px pl-2 text-[10.800px] leading-4 text-[#252423]">rank</div>
      <RangeInputs lo="1.00" hi="36.00" cls="mt-[6px]" />
      <Slider a={23.500} b={136.500} from={23} to={180} />
      <h3 className={`${din} mt-[54px] tracking-[0.200px]`}>Min Attempts</h3>
      <div className="mt-[3px] flex items-center justify-between pr-[11px] pl-2 text-[14px] leading-5 text-[#252423]">
        att
        <svg className="mb-1 h-[7px] w-[12px]" viewBox="0 0 12 7"><path d="M.5.5L6 6 11.500.5" fill="none" stroke="#605e5c" /></svg>
      </div>
      <RangeInputs lo="100.00" hi="349.00" cls="mt-[4px]" />
      <Slider a={56} b={182} from={21} to={182} />
    </div>
  </div>
);

const Report = () => (
  <div className="mt-[11px] ml-[46px] h-[724px] w-[1284px] border-2 border-dotted border-[#55534f]">
    <div className="flex">
      <Slicers />
      <Scatter
        cls="h-[336px] w-[433px]" box="529 213 433 336" title="Yards Before Contact vs Yards After Contact" titleX={537} titleW={328} titleY={223}
        x0={584.500} xv={1.500} kx={183.100} xTicks={range(1.5, 3.5, 0.5)} left={584} right={950.500}
        y0={456.300} yv={1.500} ky={164} yTicks={range(1.5, 2.5, 0.5)} top={277} bottom={505.500}
        fmt={(n) => n.toFixed(1)} xfmt={(n) => n.toFixed(1)}
        xTitle="Yards Before Contact" xTitleW={134} yTitle="Yards After Contact" yTitleX={544.500} yTitleW={124} yTitleC={390}
        avgX={2.446} avgXText="2.45" avgXW={22} avgY={1.802} avgYText="1.80" avgYW={22}
        trend={[1.7, 1.738, 3.5, 1.89]} dots={contactDots} arrow={942}
        legend={[...playerLegend, ["EdwaGu00", "#c24f0a", 315, 61.500]]}
      />
      <Scatter
        cls="h-[336px] w-[417px]" box="962 213 417 336" title="Fantasy Points vs Targets" titleX={968} titleW={192.500} titleY={223}
        x0={1019.700} xv={100} kx={1.148} xTicks={range(100, 400, 100)} left={1019.500} right={1364}
        y0={505.500} yv={0} ky={2.295} yTicks={[0, 50, 100]} top={276} bottom={505.500}
        fmt={String} xfmt={String} xTitle="Fantasy Points" xTitleW={94} yTitle="Targets" yTitleX={976} yTitleW={48} yTitleC={390}
        avgX={215.600} avgXText="216.07" avgXW={35} avgY={54.880} avgYText="54.88" avgYW={28}
        trend={[137, 39.5, 391, 89.7]} dots={targetDots} arrow={1357} legend={playerLegend}
      />
    </div>
    <div className="flex">
      <BarChart />
      <Scatter
        cls="h-[384px] w-[427px]" box="535 549 427 384" title="Yards Per Reception vs Yards per Attempt" titleX={552} titleW={312} titleY={559}
        x0={628.700} xv={5} kx={29.270} xTicks={[5, 10, 15]} left={599} right={950}
        y0={889.700} yv={3.500} ky={138.700} yTicks={range(3.5, 5.5, 0.5)} top={612} bottom={890}
        fmt={(n) => n.toFixed(1)} xfmt={String} marks={[592.5, 687.5, 782.5, 877.5]}
        xTitle="Yards Per Reception" xTitleW={128} yTitle="Yards Per Attempt" yTitleX={559} yTitleW={116} yTitleC={750.500}
        avgX={7.400} avgXText="7.41" avgXW={20.500} avgY={4.262} avgYText="4.26" avgYW={22.500}
        trend={[4.9, 4.325, 15, 4.07]} dots={receptionDots} arrow={941} legend={playerLegend}
      />
      <div className="relative h-[384px] w-[417px]">
        <Scatter
          cls="h-[384px] w-[417px]" box="962 549 417 384" title="Fantasy Points vs Attempts" titleX={968} titleW={204.500} titleY={559}
          x0={1019.700} xv={100} kx={1.148} xTicks={range(100, 400, 100)} left={1019.500} right={1364}
          y0={889.700} yv={100} ky={1.387} yTicks={range(100, 300, 50)} top={612} bottom={890}
          fmt={String} xfmt={String} xTitle="Fantasy Points" xTitleW={94} yTitle="Attempts" yTitleX={976} yTitleW={58} yTitleC={750.500}
          avgX={215.600} avgXText="216.07" avgXW={35} avgY={213.090} avgYText="213.09" avgYW={35}
          trend={[137, 175, 391, 297]} dots={attemptDots} arrow={1357} legend={playerLegend}
        />
        <div className="pointer-events-none absolute inset-x-[1px] top-0 bottom-[1px] border border-[#e6e5e4]" />
        <div className="absolute top-[77px] left-[72px] h-[108px] w-[140px] bg-[#383838]/97">
          <svg className="absolute top-[83px] left-[140px] h-[15px] w-[8px]" viewBox="0 0 8 15"><path d="M0 0l8 8-8 7z" fill="#383838" /></svg>
          <dl className="mt-[20px] grid grid-cols-[45px_1fr] gap-x-[15px] text-[15px] leading-[22.500px] tracking-[-0.300px] text-[#d0d0d0]">
            <dt className="text-right">id</dt><dd className="font-bold tracking-[-0.750px] text-[#ededed]">WillKy02</dd>
            <dt className="text-right">fpts</dt><dd className="font-bold tracking-[-0.550px] text-[#ededed]">255.00</dd>
            <dt className="text-right">att</dt><dd className="font-bold tracking-[-0.550px] text-[#ededed]">228.00</dd>
          </dl>
        </div>
      </div>
    </div>
  </div>
);

/* ---------- side panes ---------- */

const Chevrons = ({ flip, className = "" }: { flip?: boolean; className?: string }) => (
  <svg className={`h-[17px] w-[16px] ${flip ? "rotate-180" : ""} ${className}`} viewBox="0 0 16 17">
    <path d="M1 1l7 7.500L1 16M8 1l7 7.500L8 16" fill="none" stroke={INK} strokeWidth="1.400" />
  </svg>
);

const Sidebar = () => (
  <aside className="w-[51px] shrink-0 border-r border-[#d8d6d4] bg-[#f3f2f1]">
    <div className="h-[50px] border-l-[3px] border-[#2b7a63] pt-[15px] pl-[13px]">
      <svg className="h-[19px] w-[19px]" viewBox="0 0 19 19" fill="#b3b0ad" stroke="#252423" strokeWidth="1.500">
        <path d="M1.500 1v16.500H18" fill="none" /><path d="M4 5h3v10H4zM9 8h3v7H9zM14 2.500h3V15h-3z" />
      </svg>
    </div>
    <svg className="mt-[13px] ml-[15px] h-[21px] w-[21px]" viewBox="0 0 21 21" fill="none" stroke="#797775" strokeWidth="1.500">
      <path d="M1 1h19v19H1zM1 4.500h19M1 9.500h19M1 14.500h19M7.500 4.500V20M13.500 4.500V20" />
    </svg>
    <svg className="mt-[28px] ml-[14px] h-[24px] w-[24px]" viewBox="0 0 24 24" fill="none" stroke="#797775" strokeWidth="1.500">
      <path d="M1 7h9v9H1zM1 10h9M13 1.500h9.500v8.500H13zM13 4.500h9.500M13 14h9.500v8.500H13zM13 17h9.500M6 7V3.500h7M6 16v4h7" />
    </svg>
  </aside>
);

const FiltersPane = () => (
  <div className="flex w-[41px] flex-col items-center border-l border-[#a19f9d] bg-white pt-[15px]">
    <Chevrons flip className="ml-px" />
    <svg className="mt-[19px] ml-[5px] h-[16px] w-[16px]" viewBox="0 0 16 16"><path d="M14.500 1v14L8 10.500H1.500v-4H8z" fill="none" stroke={INK} strokeWidth="1.400" /></svg>
    <span className="mt-[9px] text-[18px] leading-5 font-semibold tracking-[-0.100px] text-[#252423] [writing-mode:vertical-rl]">Filters</span>
  </div>
);

const VisualizationsPane = () => (
  <section className="w-[226px] shrink-0 border-l border-[#e1dfdd] bg-[#f3f2f1] text-[#252423]">
    <div className="flex items-center justify-between pt-[12px] pr-[10px] pl-[10px]">
      <h2 className="text-[19px] leading-[26px] font-semibold tracking-[-0.530px]">Visualizations</h2>
      <Chevrons />
    </div>
    <div className="mt-[10px] pl-[10px] text-[14.800px] leading-5 tracking-[-0.200px]">Build visual</div>
    <div className="mt-[4px] flex h-10 pl-[10px]">
      <div className="flex h-10 w-10 items-center justify-center bg-[#d2d0ce]">
        <svg className="h-[30px] w-[30px]" viewBox="0 0 30 30">
          <path d="M0 .7h24" stroke={INK} strokeWidth="1.400" />
          <g fill="#2b7a63" stroke={INK} strokeWidth="1.800" strokeDasharray="2 1.500"><path d="M1 7h28v8H1zM1 20.500h28v8H1z" /></g>
        </svg>
      </div>
      <svg className="mt-1 ml-[47px] h-[31px] w-[31px]" viewBox="0 0 31 31" fill="none" stroke={INK} strokeWidth="1.500">
        <path d="M6 30H1V1h13l8 8v4M14 1v8.500h8" />
        <path d="M30 12L18 24M30 12c2 2-6 10-9 14M18 23c-5 0-4 5-9 6 4 2 12 1 11.500-4z" fill="#a19f9d" />
      </svg>
    </div>
    <svg className="mt-[4px] block h-[12px] w-full" viewBox="0 0 225 12">
      <path d="M0 11.500H20L30 1.500l10 10H225" fill="none" stroke="#8a8886" strokeWidth="1.200" />
    </svg>
    <div className="ml-[8px] grid w-[210px] grid-cols-6 pt-[8px]">
      {gallery.map((g, i) => (
        <div key={i} className="flex h-[35px] w-[35px] items-center justify-center">
          <svg className="h-[23px] w-[23px] overflow-visible" viewBox="0 0 23 23">{g}</svg>
        </div>
      ))}
    </div>
    <div className="mt-[5px] border-t border-[#d8d6d4] px-[5px] pt-[11px] text-[14.600px] leading-5 tracking-[-0.100px]">
      <div className="pl-[10px]">Values</div>
      <div className="mt-[6px] flex h-[35px] w-[213px] items-center rounded-[2px] border border-dashed border-[#c8c6c4] bg-white pl-[12px]">Add data fields here</div>
      <div className="mt-[14px] pl-[10px] text-[#3b3a39] [-webkit-text-stroke:0.3px]">Drill through</div>
      <div className="mt-[11px] flex items-center justify-between pr-[22px] pl-[10px] tracking-[-0.220px]">
        Cross-report
        <span className="flex h-5 w-10 items-center gap-[2px] rounded-full border border-[#797775] bg-white pl-[5px] text-[11.500px] text-[#605e5c]">
          <i className="h-[10px] w-[10px] rounded-full bg-[#605e5c]" />Off
        </span>
      </div>
      <div className="mt-[14px] flex items-center justify-between pr-[22px] pl-[10px]">
        Keep all filters
        <span className="flex h-5 w-10 items-center gap-[4px] rounded-full bg-[#2b7a63] pl-[5px] text-[11.500px] text-white">
          On<i className="h-[10px] w-[10px] rounded-full bg-white" />
        </span>
      </div>
      <div className="mt-[13px] flex h-[32px] w-[213px] items-center rounded-[2px] border border-dashed border-[#c8c6c4] bg-white pt-px pl-[10px] whitespace-nowrap">Add drill-through fields here</div>
    </div>
  </section>
);

const DataPane = () => (
  <section className="w-[226px] shrink-0 border-l border-[#e1dfdd] bg-[#f3f2f1] text-[#252423]">
    <div className="flex items-center justify-between pt-[12px] pr-[10px] pl-[11px]">
      <h2 className="text-[19px] leading-[26px] font-semibold tracking-[-0.400px]">Data</h2>
      <Chevrons />
    </div>
    <div className="mt-[19px] ml-[5px] flex h-[33px] w-[215px] items-center rounded-[2px] border border-[#605e5c] bg-[#f6f5f4] pl-[9px]">
      <svg className="h-[19px] w-[19px]" viewBox="0 0 19 19" fill="none" stroke="#605e5c" strokeWidth="1.300">
        <circle cx="12" cy="6.500" r="5.500" /><path d="M8 11L1 18" />
      </svg>
      <span className="ml-[7px] pt-[2px] text-[16.500px] tracking-[-0.200px] text-[#605e5c]">Search</span>
    </div>
    <div className="mt-[12px]">
      {["player", "redzone", "season", "snaps", "weekly"].map((t) => (
        <div key={t} className="flex h-[30px] items-center pl-[12px] text-[14.500px] tracking-[-0.180px] text-[#484644]">
          <svg className="h-[14px] w-[9px]" viewBox="0 0 9 14"><path d="M1 .5L8 7l-7 6.500" fill="none" stroke="#605e5c" strokeWidth="1.200" /></svg>
          <svg className="ml-[7px] h-4 w-4" viewBox="0 0 16 16" fill="none" stroke={INK} strokeWidth="1.400">
            <rect x=".8" y=".8" width="14.400" height="14.400" rx="3" /><path d="M5.500 1v14M10.500 1v14M1 5.500h14M1 10.500h14" />
          </svg>
          <span className="ml-[7px]">rb_data {t}</span>
        </div>
      ))}
    </div>
  </section>
);

const pages = [
  ["Key Influences of Fantasy Points", "w-[260px]"], ["Fantasy Points vs Age", "w-[193px]"],
  ["Fantasy Points Factors Visualization", "w-[283px]"], ["Snaps Visualization", "w-[177px]"], ["Red Zone Visualization", "w-[202px]"],
];

const PageTabs = () => (
  <div className="flex h-[44px] bg-[#f3f2f1] text-[14.200px] tracking-[-0.080px] text-[#252423]">
    <div className="flex w-[160px] border-r border-[#a19f9d]">
      <div className="ml-[12px] flex w-[30px] flex-col items-center pt-[8px]">
        <svg className="h-[19px] w-[25px]" viewBox="0 0 25 19" fill="none" stroke="#605e5c" strokeWidth="1.500"><path d="M1 1h23v13H1zM12.500 14v4M8 18h9" /></svg>
        <span className="mt-[8px] h-[4px] w-[30px] rounded-sm bg-[#2b7a63]" />
      </div>
      <svg className="mt-[6px] ml-[32px] h-[26px] w-[17px]" viewBox="0 0 17 26" fill="none" stroke="#605e5c" strokeWidth="1.500"><rect x="1" y="1" width="15" height="24" rx="1.500" /><path d="M7.500 21.500h2" /></svg>
      <svg className="mt-[16px] ml-[26px] h-[11px] w-[6px]" viewBox="0 0 6 11"><path d="M6 0v11L0 5.500z" fill="#c8c6c4" /></svg>
      <svg className="mt-[16px] ml-[22px] h-[11px] w-[6px]" viewBox="0 0 6 11"><path d="M0 0v11l6-5.500z" fill="#111" /></svg>
    </div>
    {pages.map(([t, w]) => (
      <div key={t} className={`flex items-center justify-center border-r border-[#c8c6c4] bg-white whitespace-nowrap ${w}`}>{t}</div>
    ))}
    <div className="flex w-[93px] items-center border-b-[5px] border-[#2b7a63] bg-white pt-[5px] pl-[25px] font-semibold tracking-[-0.600px]">Efficiency</div>
    <div className="mt-[2px] flex h-[40px] flex-1 items-center justify-center bg-[#2b7a63]">
      <svg className="h-[13px] w-[13px]" viewBox="0 0 13 13"><path d="M6.500 0v13M0 6.500h13" stroke="#fff" strokeWidth="2.600" /></svg>
    </div>
  </div>
);

const StatusBar = () => (
  <div className="flex h-[29px] shrink-0 items-center border-t border-[#e1dfdd] bg-[#f3f2f1] text-[#484644]">
    <span className="ml-[5px] pt-[4px] text-[14.800px] tracking-[-0.200px]">Page 6 of 6</span>
    <svg className="ml-auto h-[20px] w-[160px]" viewBox="0 0 160 20" stroke="#605e5c" fill="none">
      <path d="M0 10.500h6" strokeWidth="2" /><path d="M12 10.500h125" strokeWidth="1.300" /><path d="M61 4v13" strokeWidth="5" /><path d="M74.500 7v8" /><path d="M144 10.500h10M149 5.500v10" strokeWidth="1.800" />
    </svg>
    <span className="ml-[10px] w-[53px] text-[14.300px] tracking-[-0.350px] text-[#605e5c]">80%</span>
    <svg className="mr-[23px] h-[16px] w-[20px]" viewBox="0 0 20 16" fill="none" stroke="#55595f" strokeWidth="1.400">
      <path d="M.8.8h18.400v14.400H.8z" fill="#d9edf9" /><path d="M4 6V4h3M13 4h3v2M16 10v2h-3M7 12H4v-2" />
    </svg>
  </div>
);

/* ---------- taskbar ---------- */

const TaskButton = ({ w, active, open, children }: { w: string; active?: boolean; open?: boolean; children: React.ReactNode }) => (
  <div className={`flex h-[50px] flex-col items-center ${w} ${active ? "bg-[#51485c]" : ""}`}>
    <svg className="mt-[10px] h-[30px] w-[30px]" viewBox="0 0 30 30">{children}</svg>
    {open && <span className="mt-auto h-[3px] w-full bg-[#5fb75f]" />}
  </div>
);

const Taskbar = () => (
  <footer className="flex h-[51px] shrink-0 border-t border-black bg-[#261a33] text-white">
    <svg className="mt-[16px] ml-[20px] h-5 w-5" viewBox="0 0 20 20" fill="#fff"><path d="M0 3l8.500-1.200v7.700H0zM9.500 1.600L20 0v9.500H9.500zM0 10.500h8.500v7.700L0 17zM9.500 10.500H20V20L9.500 18.500z" /></svg>
    <div className="ml-[20px] flex h-[50px] w-[360px] items-center border border-[#5c5c5c] bg-[#333] pr-[4px] pl-[14px]">
      <svg className="h-[21px] w-[21px]" viewBox="0 0 21 21" fill="none" stroke="#fff" strokeWidth="1.500"><circle cx="13.500" cy="7.500" r="6.500" /><path d="M9 12.500L1 20.500" /></svg>
      <span className="ml-[14px] text-[18.600px] tracking-[-0.380px] text-[#e0e0e0]">Type here to search</span>
      <span className="ml-auto flex h-10 w-[90px] items-center justify-center rounded-full bg-[#e9eaee]">
        <svg className="h-[28px] w-[28px]" viewBox="0 0 28 28">
          <defs>
            <linearGradient id="cpA" x1="0" y1="0" x2="0" y2="1"><stop offset="0" stopColor="#1765d8" /><stop offset=".5" stopColor="#1ea0c8" /><stop offset="1" stopColor="#e0c826" /></linearGradient>
            <linearGradient id="cpB" x1="1" y1="0" x2="0" y2="1"><stop offset="0" stopColor="#9a4df0" /><stop offset=".5" stopColor="#e8509c" /><stop offset="1" stopColor="#fb9a3c" /></linearGradient>
          </defs>
          <path d="M9 1h9c2 0 3 1 3.500 3L22 6h-4c-2 0-3 1-4 4l-2 7c-.7 2-1.500 3-4 3H4c-4 0-4-3-3-6l3-9c1-3 2-4 5-4z" fill="url(#cpA)" />
          <path d="M19 27h-9c-2 0-3-1-3.500-3L6 22h4c2 0 3-1 4-4l2-7c.7-2 1.500-3 4-3h4c4 0 4 3 3 6l-3 9c-1 3-2 4-5 4z" fill="url(#cpB)" />
        </svg>
      </span>
    </div>
    <svg className="mt-[16px] mr-[29px] ml-[20px] h-5 w-5" viewBox="0 0 20 20" fill="none" stroke="#fff" strokeWidth="1.300"><path d="M1 0v3.500h12V0M1 20v-3.500h12V20M1 6.500h12v7H1zM18 0v5M18 12v8" /><path d="M16.500 6.500h3v3.500h-3z" fill="#fff" stroke="none" /></svg>
    <div className="flex gap-[11px]">
      <TaskButton w="w-[51px]" open>
        <circle cx="15" cy="15" r="14.500" fill="#e2463a" /><path d="M2.400 8A14.500 14.500 0 0 0 13 29.400L20 18l-10 0z" fill="#2da24f" /><path d="M28 9H15l6 9-8 11.400A14.500 14.500 0 0 0 28 9z" fill="#f9c716" /><circle cx="15" cy="15" r="7" fill="#fff" /><circle cx="15" cy="15" r="5.400" fill="#2d7be5" />
      </TaskButton>
      <TaskButton w="w-[51px]" open>
        <path d="M1 3h10l3 3h15v8H1z" fill="#e0a010" /><path d="M1 8h28v17H1z" fill="#fbd265" /><path d="M6 27V17c0-1 1-2 2-2h14c1 0 2 1 2 2v10h-4v-6H10v6z" fill="#3a93dd" />
      </TaskButton>
      <TaskButton w="w-[51px]">
        <circle cx="15" cy="15" r="14" fill="#1fd561" /><path d="M7 10.500c6-2 12-1 17 1.500M8 15.500c5-1.500 10-1 14 1.500M9 20c4-1.200 8-.8 11.500 1.300" fill="none" stroke="#17152b" strokeWidth="2.400" strokeLinecap="round" />
      </TaskButton>
      <TaskButton w="w-[51px]">
        <path d="M2 14L17 6l11 5-14 8z" fill="#fff" /><path d="M2 15.500l11.500 5V26L2 20zM15 20.500l13-7.500v5.500L15 26z" fill="#fff" /><path d="M7 13l11 5M17 22l9-5" stroke="#261a33" strokeWidth="1" />
      </TaskButton>
      <TaskButton w="w-[51px]">
        <circle cx="15" cy="15" r="14.800" fill="#5565f0" /><path d="M11 8.500c-2 .3-3 1-4 2-2 4-2 7-2 9.500 2 2 3 2 5 2l1-2c3 .8 5 .8 8 0l1 2c2 0 3 0 5-2 0-3 0-6-2-9.500-1-1-2-1.700-4-2l-1 1.500h-6z" fill="#fff" /><ellipse cx="11.700" cy="15.500" rx="1.900" ry="2.200" fill="#5565f0" /><ellipse cx="18.300" cy="15.500" rx="1.900" ry="2.200" fill="#5565f0" />
      </TaskButton>
      <TaskButton w="w-[51px]" open>
        <path d="M2 3c0-1 .5-1.500 1.500-1.500h23c1 0 1.500.5 1.500 1.500v12L16 28H3.500C2.500 28 2 27.500 2 26.500z" fill="#ffd60a" /><path d="M28 15v12c0 1-.5 1.500-1.500 1.500H15z" fill="#e3a900" /><path d="M28 15h-8c-3 0-5 2-5 5v8.500z" fill="#3b3a39" />
      </TaskButton>
      <TaskButton w="w-[51px]" open>
        <path d="M22 0l7 3v24l-7 3L9 18l-5 4-3-2 5-5-5-5 3-2 5 4zM22 9l-8 6 8 6z" fill="#1f8ad2" fillRule="evenodd" /><path d="M22 0l7 3v24l-7 3z" fill="#39a6ee" />
      </TaskButton>
    </div>
    <div className="ml-[6px]">
      <TaskButton w="w-[61px]" active open>
        <path d="M18 1h8v28h-8z" fill="#d49a14" /><path d="M11 8h8c1 0 1.500.5 1.500 1.500V29H11z" fill="#f0c02e" /><path d="M4 15h9v14H4z" fill="#f9d85a" />
      </TaskButton>
    </div>
    <div className="ml-auto flex items-center">
      <svg className="h-[22px] w-[31px]" viewBox="0 0 31 22">
        <defs><linearGradient id="cl" x1="0" y1="0" x2="0" y2="1"><stop offset="0" stopColor="#7fa9f4" /><stop offset="1" stopColor="#dbe8fb" /></linearGradient></defs>
        <path d="M7 21a6 6 0 0 1 0-12C8-3 23-2 24 9c9 1 8 12 0 12z" fill="url(#cl)" />
      </svg>
      <span className="ml-[10px] w-[132px] text-[17.800px] whitespace-pre tracking-[-0.250px]">50°F  Cloudy</span>
      <svg className="h-[9px] w-[16px]" viewBox="0 0 16 9"><path d="M1 8l7-7 7 7" fill="none" stroke="#fff" strokeWidth="1.500" /></svg>
      <svg className="ml-[15px] h-[20px] w-[16px]" viewBox="0 0 16 20" fill="none" stroke="#fff" strokeWidth="1.300"><rect x="1" y="5" width="9" height="10" rx="2" /><path d="M10 9l4-3v8l-4-3M3 2.500C5 1 8 1 10 2.500M3 17.500c2 1.500 5 1.500 7 0" /></svg>
      <svg className="ml-[10px] h-[20px] w-[21px]" viewBox="0 0 21 20" fill="none" stroke="#fff" strokeWidth="1.300"><path d="M12 18H1V3l18-2v9M5 12a4 4 0 0 1 7-4M12 5v3H9M5 15v-3h3M9 15l3-1" /><circle cx="16" cy="15" r="4.800" fill="#2b7cd3" stroke="none" /></svg>
      <svg className="ml-[9px] h-[18px] w-[21px]" viewBox="0 0 21 18"><path d="M5 13a5 5 0 0 1 0-9c3-5 10-4 11 1 5 1 5 7 0 8z" fill="#c9c9cf" /><circle cx="14.500" cy="12" r="5.500" fill="#fff" /><path d="M11.500 12a3 3 0 0 1 5.500-1.500M17.500 12a3 3 0 0 1-5.500 1.500" stroke="#1d72c9" strokeWidth="1.500" fill="none" /></svg>
      <svg className="ml-[9px] h-[14px] w-[20px]" viewBox="0 0 20 14"><path d="M5 3.500h13v9H4V8" fill="none" stroke="#fff" strokeWidth="1.300" /><path d="M7 5.500h9v5H7zM0 1h6v4L4 7H2L0 5zM19 6h1v4h-1z" fill="#fff" /></svg>
      <svg className="ml-[9px] h-[18px] w-[21px]" viewBox="0 0 21 18" fill="none" stroke="#fff" strokeWidth="1.200"><path d="M1 6h3l4-4v14l-4-4H1zM11 6c1.500 2 1.500 4 0 6" /><path d="M14 4c2.500 3 2.500 7 0 10M17 2c3.500 4 3.500 10 0 14" stroke="#8c8595" /></svg>
      <svg className="ml-[11px] h-[18px] w-[18px]" viewBox="0 0 18 18" fill="none" stroke="#fff" strokeWidth="1.200"><path d="M1 17C1 8 7 2 17 2M5 17C5 11 9 6 17 6M9 17c0-4 3-7 8-7" /><circle cx="14.500" cy="15" r="1.500" fill="#fff" /></svg>
      <div className="ml-[10px] w-[76px] text-center text-[14.700px] leading-[23px] tracking-[-0.500px]"><div>10:24 PM</div><div>2/15/2024</div></div>
      <div className="relative ml-[19px] h-[30px] w-[31px]">
        <svg className="h-[20px] w-[20px]" viewBox="0 0 20 20"><path d="M0 0h20v16h-9l-5 4v-4H0z" fill="#fff" /><path d="M3 4h13M3 8h13M3 12h9" stroke="#261a33" strokeWidth="1.300" /></svg>
        <span className="absolute top-[10px] left-[9px] flex h-5 w-5 items-center justify-center rounded-full border border-[#8a8a8a] bg-[#333] text-[13px] font-semibold">3</span>
      </div>
      <span className="ml-[15px] h-[50px] w-px bg-[#8a8492]" />
      <span className="w-[5px]" />
    </div>
  </footer>
);

export default function App() {
  return (
    <div className="flex h-[1080px] w-[1920px] flex-col overflow-hidden bg-white font-['Open_Sans',sans-serif]">
      <TitleBar />
      <Ribbon />
      <main className="flex h-[800px] shrink-0">
        <Sidebar />
        <div className="flex w-[1417px] shrink-0 flex-col">
          <div className="flex h-[756px]">
            <div className="w-[1376px]"><Report /></div>
            <FiltersPane />
          </div>
          <PageTabs />
        </div>
        <VisualizationsPane />
        <DataPane />
      </main>
      <StatusBar />
      <Taskbar />
    </div>
  );
}
